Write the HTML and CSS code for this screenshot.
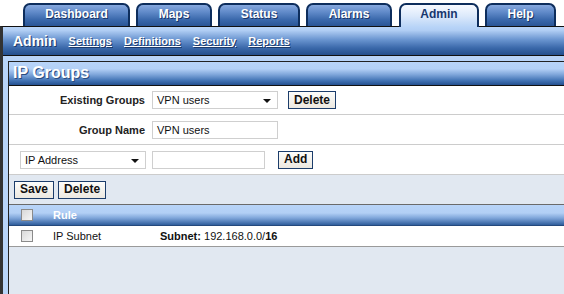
FILE: index.html
```html
<!DOCTYPE html>
<html>
<head>
<meta charset="utf-8">
<link rel="stylesheet" href="styles.css">
</head>
<body>
<div class="tabs">
  <div class="tab t-dash">Dashboard</div>
  <div class="tab t-maps">Maps</div>
  <div class="tab t-status">Status</div>
  <div class="tab t-alarms">Alarms</div>
  <div class="tab t-admin active">Admin</div>
  <div class="tab t-help">Help</div>
</div>
<div class="frame">
  <div class="subnav">
    <span class="subnav-title">Admin</span>
    <a class="sublink">Settings</a>
    <a class="sublink">Definitions</a>
    <a class="sublink">Security</a>
    <a class="sublink">Reports</a>
  </div>
  <div class="content">
    <div class="panel">
      <div class="panel-head">IP Groups</div>
      <div class="row row-first">
        <label class="lbl">Existing Groups</label>
        <span class="select w-grp">VPN users</span>
        <button class="btn b-del1">Delete</button>
      </div>
      <div class="row">
        <label class="lbl">Group Name</label>
        <span class="input w-grp">VPN users</span>
      </div>
      <div class="row row-ip">
        <span class="select w-ip">IP Address</span>
        <span class="input w-addr"></span>
        <button class="btn b-add">Add</button>
      </div>
      <div class="actions">
        <button class="btn">Save</button>
        <button class="btn">Delete</button>
      </div>
      <div class="thead">
        <span class="cb"></span>
        <span class="th-rule">Rule</span>
      </div>
      <div class="trow">
        <span class="cb"></span>
        <span class="td-type">IP Subnet</span>
        <span class="td-val"><b>Subnet:</b> 192.168.0.0/<b>16</b></span>
      </div>
    </div>
  </div>
</div>
</body>
</html>
```
FILE: styles.css
```css
html, body {
  margin: 0;
  padding: 0;
  background: #ffffff;
  font-family: Tahoma, "Liberation Sans", Arial, sans-serif;
  overflow: hidden;
}
.tabs {
  display: flex;
  align-items: flex-end;
  height: 26px;
  padding-left: 23px;
  box-sizing: border-box;
  position: relative;
  z-index: 2;
}
.tab {
  height: 23px;
  box-sizing: border-box;
  border: 2px solid #0d2d5c;
  border-bottom: 0;
  border-radius: 7px 7px 0 0;
  background: linear-gradient(#86a8de 0%, #5f89c8 35%, #3a68ab 70%, #2a5596 100%);
  color: #ffffff;
  font-weight: bold;
  font-size: 12px;
  text-align: center;
  padding-top: 2px;
  text-shadow: 1px 1px 0 #1a3566;
  flex: none;
}
.t-dash { width: 107px; margin-right: 6px; }
.t-maps { width: 76px; margin-right: 6px; }
.t-status { width: 82px; margin-right: 6px; }
.t-alarms { width: 86px; margin-right: 7px; }
.t-admin { width: 80px; margin-right: 6px; }
.t-help { width: 71px; }
.tab.active {
  background: linear-gradient(#f7faff 0%, #dce9fb 50%, #b8d4f7 100%);
  color: #17376e;
  text-shadow: none;
  height: 24px;
  margin-bottom: -1px;
}
.frame {
  border-left: 3px solid #333333;
  border-top: 1px solid #111111;
  height: 268px;
  background: #b8d4f8;
}
.subnav {
  height: 29px;
  box-sizing: border-box;
  border-bottom: 1px solid #111111;
  background: linear-gradient(#b8d4f8 0%, #b1cef4 12%, #6a95d0 45%, #3a68aa 75%, #234f8d 100%);
  display: flex;
  align-items: center;
  padding-left: 10px;
  color: #ffffff;
  text-shadow: 1px 1px 0 #1d3a6a;
}
.subnav-title {
  font-size: 14px;
  font-weight: bold;
  margin-right: 12px;
}
.sublink {
  font-size: 11px;
  font-weight: bold;
  text-decoration: underline;
  color: #ffffff;
  margin-right: 12px;
  margin-bottom: 1px;
}
.content {
  padding: 5px 0 0 5px;
  height: 240px;
  box-sizing: border-box;
}
.panel {
  border-left: 1px solid #222222;
  border-top: 1px solid #222222;
  background: #e1e8f1;
  height: 100%;
}
.panel-head {
  height: 24px;
  box-sizing: border-box;
  border-bottom: 1px solid #111111;
  background: linear-gradient(#b8d4f8 0%, #b3d0f6 30%, #7ea5da 55%, #4374b5 80%, #245090 100%);
  color: #ffffff;
  font-size: 16px;
  font-weight: bold;
  padding-left: 4px;
  line-height: 22px;
  text-shadow: 1px 1px 0 #2a4c80;
}
.row {
  height: 30px;
  box-sizing: border-box;
  border-bottom: 1px solid #cccccc;
  background: #ffffff;
  display: flex;
  align-items: center;
  font-size: 11px;
}
.row-first { height: 29px; }
.lbl {
  width: 136px;
  text-align: right;
  font-weight: bold;
  color: #222222;
  margin-right: 7px;
  font-size: 11px;
}
.select, .input {
  height: 18px;
  box-sizing: border-box;
  border: 1px solid #cfcfcf;
  background: #ffffff;
  font-size: 11px;
  color: #111111;
  padding-left: 4px;
  line-height: 16px;
  position: relative;
}
.select::after {
  content: "";
  position: absolute;
  right: 6px;
  top: 7px;
  border-left: 4px solid transparent;
  border-right: 4px solid transparent;
  border-top: 4px solid #111111;
}
.w-grp { width: 126px; }
.w-ip { width: 126px; }
.w-addr { width: 113px; margin-left: 6px; }
.row-ip { padding-left: 11px; }
.btn {
  height: 18px;
  box-sizing: border-box;
  border: 1px solid #1c3d6b;
  background: linear-gradient(#fdfdfb, #ece8e0);
  font-family: Tahoma, "Liberation Sans", Arial, sans-serif;
  font-size: 12px;
  font-weight: bold;
  color: #111111;
  padding: 0 5px;
  line-height: 15px;
  margin: 0;
}
.b-del1 { margin-left: 10px; }
.b-add { margin-left: 13px; }
.actions {
  height: 30px;
  box-sizing: border-box;
  border-bottom: 1px solid #6a6a6a;
  display: flex;
  align-items: center;
  gap: 4px;
  padding-left: 5px;
  background: #e1e8f1;
}
.thead {
  height: 21px;
  box-sizing: border-box;
  border-bottom: 1px solid #24487c;
  background: linear-gradient(#b8d4f8 0%, #b2cff5 40%, #7fa6da 65%, #2f5d9c 100%);
  display: flex;
  align-items: center;
  padding-left: 12px;
  color: #ffffff;
  font-size: 11px;
  font-weight: bold;
}
.cb {
  width: 12px;
  height: 12px;
  box-sizing: border-box;
  border: 1px solid #8a8a8a;
  background: linear-gradient(135deg, #d8d8d8, #f6f6f6);
  flex: none;
}
.th-rule { margin-left: 20px; }
.trow {
  height: 21px;
  box-sizing: border-box;
  border-bottom: 1px solid #9a9a9a;
  background: #ffffff;
  display: flex;
  align-items: center;
  padding-left: 12px;
  font-size: 11px;
  color: #111111;
}
.td-type { margin-left: 20px; width: 107px; }
.td-val b { font-weight: bold; }
```
